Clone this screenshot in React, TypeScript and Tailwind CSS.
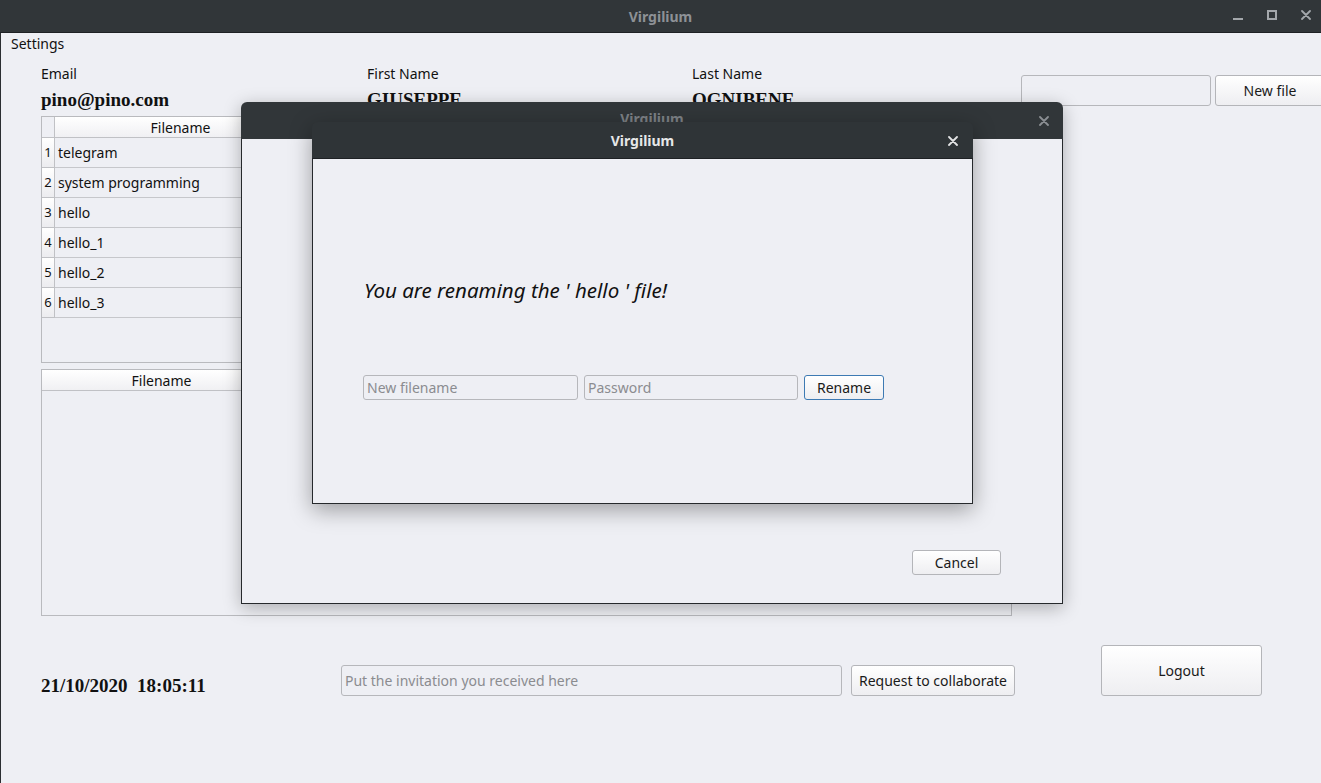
import React from "react";

const files = ["telegram", "system programming", "hello", "hello_1", "hello_2", "hello_3"];

const ui = { fontFamily: '"Noto Sans", "Open Sans", sans-serif' };
const serif = { fontFamily: '"Liberation Serif", serif' };

function CloseX({ className }: { className: string }) {
  return (
    <svg width="10" height="10" viewBox="0 0 10 10" className={className}>
      <path d="M1 1 L9 9 M9 1 L1 9" stroke="currentColor" strokeWidth="1.8" strokeLinecap="round" />
    </svg>
  );
}

function QtButton({ children, className = "" }: { children: React.ReactNode; className?: string }) {
  return (
    <button
      className={`flex shrink-0 items-center justify-center rounded-[3px] border border-[#b4b5b9] bg-gradient-to-b from-white to-[#eeeef1] text-[14px] text-[#1a1a1a] ${className}`}
    >
      {children}
    </button>
  );
}

function Field({ placeholder, className = "" }: { placeholder?: string; className?: string }) {
  return (
    <div className={`flex shrink-0 items-center rounded-[3px] border border-[#b6b7bb] bg-[#eeeff4] px-[3px] text-[14px] text-[#8b8c90] ${className}`}>
      {placeholder}
    </div>
  );
}

function FileTable({ rows, headerWidth }: { rows: string[]; headerWidth: number }) {
  return (
    <div className="flex h-[247px] w-[971px] flex-col border border-[#b9babe]">
      <div className="flex h-[21px] border-b border-[#c0c1c5]">
        {rows.length > 0 && <div className="w-[13px] border-r border-[#c0c1c5]" />}
        <div
          className="flex items-center justify-center border-r border-[#c0c1c5] bg-gradient-to-b from-white to-[#f0f0f3] text-[14px]"
          style={{ width: headerWidth }}
        >
          Filename
        </div>
      </div>
      {rows.map((f, i) => (
        <div key={f} className="flex h-[30px]">
          <div className="flex w-[13px] items-center justify-center border-r border-b border-[#c0c1c5] bg-gradient-to-b from-white to-[#ececef] text-[13px]">
            {i + 1}
          </div>
          <div
            className="flex items-center border-r border-b border-[#c6c7cb] pl-[3px] text-[14px]"
            style={{ width: headerWidth }}
          >
            {f}
          </div>
        </div>
      ))}
    </div>
  );
}

export default function App() {
  return (
    <div className="relative h-[783px] w-[1321px] overflow-hidden bg-[#eeeff4] text-[#111]" style={ui}>
      {/* main title bar */}
      <div className="relative flex h-[33px] items-center justify-center border-b border-[#1e2124] bg-[#313639]">
        <span className="text-[14px] font-bold text-[#8d9196]">Virgilium</span>
        <div className="absolute right-[10px] top-[9px] flex items-center gap-[24px] text-[#a3a7ab]">
          <svg width="10" height="12" viewBox="0 0 10 12"><rect x="0" y="9" width="10" height="2" fill="currentColor" /></svg>
          <svg width="10" height="12" viewBox="0 0 10 12"><rect x="1" y="2" width="8" height="8" fill="none" stroke="currentColor" strokeWidth="2" /></svg>
          <CloseX className="" />
        </div>
      </div>

      <div className="flex h-[750px] flex-col border-l border-[#2b2e31]">
        <div className="h-[22px] pl-[10px] text-[14px] leading-[22px]">Settings</div>

        <div className="flex pl-[40px] pt-[10px]">
          <div className="w-[326px] shrink-0">
            <div className="text-[14px] leading-[18px]">Email</div>
            <div className="mt-[7px] text-[19px] font-bold leading-[20px]" style={serif}>pino@pino.com</div>
          </div>
          <div className="w-[325px] shrink-0">
            <div className="text-[14px] leading-[18px]">First Name</div>
            <div className="mt-[7px] text-[19px] font-bold leading-[20px]" style={serif}>GIUSEPPE</div>
          </div>
          <div className="w-[329px] shrink-0">
            <div className="text-[14px] leading-[18px]">Last Name</div>
            <div className="mt-[7px] text-[19px] font-bold leading-[20px]" style={serif}>OGNIBENE</div>
          </div>
          <div className="mt-[10px] flex shrink-0 gap-[4px]">
            <Field className="h-[31px] w-[190px]" />
            <QtButton className="h-[31px] w-[110px]">New file</QtButton>
          </div>
        </div>

        <div className="mt-[6px] flex flex-col gap-[6px] pl-[40px]">
          <FileTable rows={files} headerWidth={252} />
          <FileTable rows={[]} headerWidth={240} />
        </div>

        <div className="mt-[25px] flex items-center pl-[40px]">
          <div className="w-[300px] pt-[31px] text-[19px] font-bold" style={serif}>
            21/10/2020&nbsp;&nbsp;18:05:11
          </div>
          <div className="flex items-center gap-[9px] pt-[20px]">
            <Field placeholder="Put the invitation you received here" className="h-[31px] w-[501px]" />
            <QtButton className="h-[31px] w-[164px]">Request to collaborate</QtButton>
          </div>
          <QtButton className="ml-[86px] h-[51px] w-[161px]">Logout</QtButton>
        </div>
      </div>

      {/* back dialog */}
      <div className="absolute left-[241px] top-[102px] flex h-[502px] w-[822px] flex-col rounded-t-[6px] shadow-[0_4px_18px_rgba(0,0,0,0.28)]">
        <div className="relative flex h-[37px] items-center justify-center rounded-t-[6px] bg-[#313639]">
          <span className="-mt-[4px] text-[14px] font-bold text-[#7d8186]">Virgilium</span>
          <CloseX className="absolute right-[14px] top-[14px] text-[#8b8f93]" />
        </div>
        <div className="flex flex-1 items-end justify-end border border-t-0 border-[#26292c] bg-[#eeeff4] pb-[28px] pr-[61px]">
          <QtButton className="h-[25px] w-[89px]">Cancel</QtButton>
        </div>
      </div>

      {/* front dialog */}
      <div className="absolute left-[312px] top-[122px] flex h-[382px] w-[661px] flex-col rounded-t-[6px] shadow-[0_6px_22px_rgba(0,0,0,0.35)]">
        <div className="relative flex h-[37px] items-center justify-center rounded-t-[6px] border-b border-[#1e2124] bg-[#2f3437]">
          <span className="text-[14px] font-bold text-[#e6e7e8]">Virgilium</span>
          <CloseX className="absolute right-[15px] top-[14px] text-[#e3e4e5]" />
        </div>
        <div className="flex flex-1 flex-col border border-t-0 border-[#26292c] bg-[#eeeff4] pl-[50px]">
          <div className="ml-[1px] mt-[117px] text-[20.5px] italic leading-[28px] text-[#111]">
            You are renaming the ' hello ' file!
          </div>
          <div className="mt-[71px] flex gap-[6px]">
            <Field placeholder="New filename" className="h-[25px] w-[215px]" />
            <Field placeholder="Password" className="h-[25px] w-[214px]" />
            <QtButton className="h-[25px] w-[80px] !border-[#3d7ab3]">Rename</QtButton>
          </div>
        </div>
      </div>
    </div>
  );
}
